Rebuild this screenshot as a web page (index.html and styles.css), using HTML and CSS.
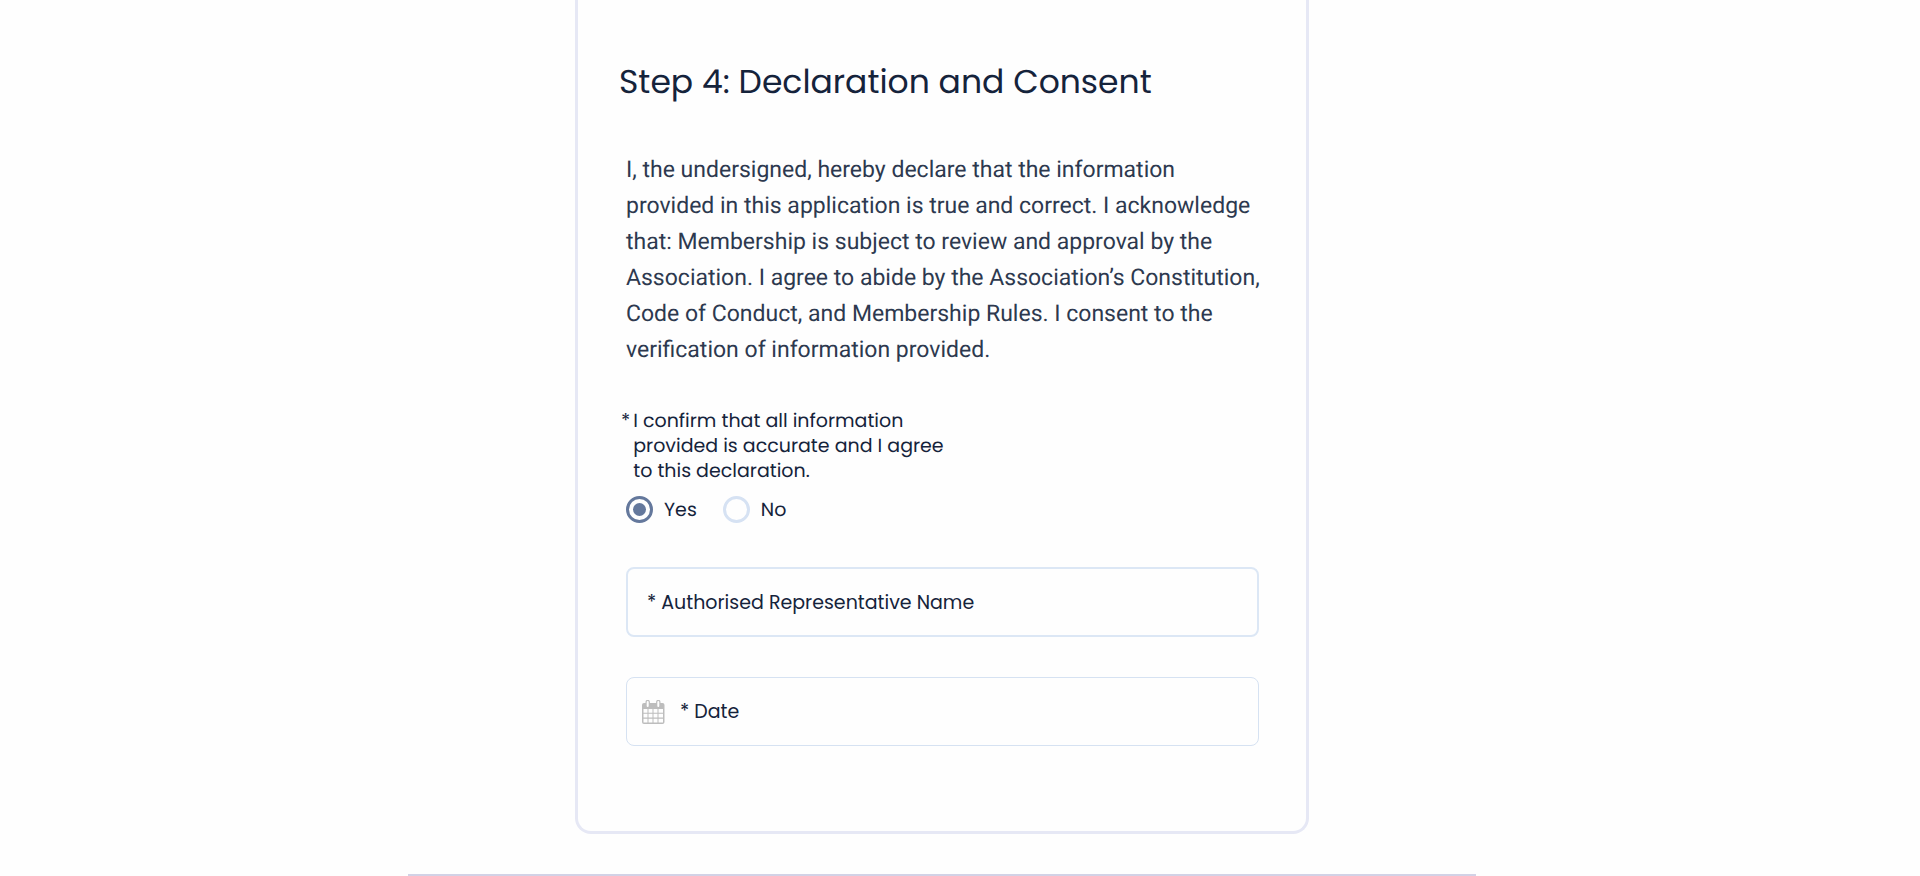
FILE: index.html
```html
<!DOCTYPE html>
<html lang="en">
<head>
<meta charset="utf-8">
<meta name="viewport" content="width=device-width, initial-scale=1">
<title>Declaration and Consent</title>
<link rel="stylesheet" href="styles.css">
</head>
<body>
<main class="section">
  <form class="card">
    <h2 class="title">Step 4: Declaration and Consent</h2>
    <p class="declaration">I, the undersigned, hereby declare that the information provided in this application is true and correct. I acknowledge that: Membership is subject to review and approval by the Association. I agree to abide by the Association’s Constitution, Code of Conduct, and Membership Rules. I consent to the verification of information provided.</p>
    <fieldset class="confirm">
      <legend class="question"><span class="star">*</span><span class="question-text">I confirm that all information provided is accurate and I agree to this declaration.</span></legend>
      <div class="options">
        <label class="option"><input class="radio" type="radio" name="confirm" value="yes" checked>Yes</label>
        <label class="option"><input class="radio" type="radio" name="confirm" value="no">No</label>
      </div>
    </fieldset>
    <div class="field field-name">
      <input class="input" type="text" aria-label="Authorised Representative Name" placeholder="* Authorised Representative Name">
    </div>
    <div class="field field-date">
      <svg class="calendar" viewBox="0 0 24 24" aria-hidden="true">
        <path fill="#bdbdbd" fill-rule="evenodd" d="M2 3H3.500V2a2.200 2.200 0 0 1 4.400 0v1h6.200V2a2.200 2.200 0 0 1 4.400 0v1h2a2 2 0 0 1 2 2v17a2 2 0 0 1-2 2H2a2 2 0 0 1-2-2V5a2 2 0 0 1 2-2zM4.700 2v4a1 1 0 0 0 2 0V2a1 1 0 0 0-2 0zM15.300 2v4a1 1 0 0 0 2 0V2a1 1 0 0 0-2 0zM1.500 9v3.800H5.500V9zM6.500 9v3.800h4V9zM11.500 9v3.800h4V9zM16.500 9v3.800h4.500V9zM1.500 13.800v3.800H5.500v-3.800zM6.500 13.800v3.800h4v-3.800zM11.500 13.800v3.800h4v-3.800zM16.500 13.800v3.800h4.500v-3.800zM1.500 18.700v3.800H5.500v-3.800zM6.500 18.700v3.800h4v-3.800zM11.500 18.700v3.800h4v-3.800zM16.500 18.700v3.800h4.500v-3.800z"/>
      </svg>
      <input class="input" type="text" aria-label="Date" placeholder="* Date">
    </div>
  </form>
</main>
</body>
</html>
```
FILE: styles.css
```css
* {
  box-sizing: border-box;
}

body {
  margin: 0;
  padding-right: 36px;
  background: #fefefe;
  color: #15233b;
  font-family: Poppins, Inter, sans-serif;
  font-size: 19px;
  text-rendering: geometricPrecision;
}

.section {
  max-width: 1068px;
  margin: 0 auto;
  padding-bottom: 40px;
  border-bottom: 2px solid #d2d2e6;
}

.card {
  max-width: 734px;
  margin: 0 auto;
  padding: 57px 47px 85px 48px;
  border: 3px solid #e6e8f5;
  border-top: 0;
  border-radius: 0 0 16px 16px;
}

.title {
  margin: 0 0 45px -7px;
  font-size: 33px;
  font-weight: 400;
  line-height: 50px;
}

.declaration {
  margin: 0 -8px 40px 0;
  color: #2d394f;
  font-family: Roboto, sans-serif;
  font-size: 23px;
  line-height: 36px;
}

.confirm {
  margin: 0 0 44px;
  padding: 0;
  border: 0;
}

.question {
  display: flex;
  gap: 3px;
  max-width: 330px;
  margin-left: -5px;
  padding: 0;
  line-height: 25px;
}

.options {
  display: flex;
  gap: 26px;
  padding-top: 13px;
}

.option {
  display: flex;
  align-items: center;
  gap: 11px;
  line-height: 27px;
}

.radio {
  display: grid;
  place-content: center;
  width: 27px;
  height: 27px;
  margin: 0;
  appearance: none;
  border: 3px solid #d6e2f3;
  border-radius: 50%;
}

.radio:checked {
  border-color: #64789c;
}

.radio:checked::before {
  width: 13px;
  height: 13px;
  border-radius: 50%;
  background: #64789c;
  content: "";
}

.field {
  display: flex;
  align-items: center;
  height: 70px;
  border: 1px solid #d6e2f2;
  border-radius: 8px;
}

.field-name {
  margin-bottom: 40px;
  padding: 0 19px;
  border-width: 2px;
  border-color: #dce7f5;
}

.field-date {
  gap: 14px;
  height: 69px;
  padding: 0 15px;
}

.calendar {
  flex: none;
  width: 24px;
  height: 24px;
}

.input {
  flex: 1;
  min-width: 0;
  padding: 0;
  border: 0;
  outline: 0;
  background: transparent;
  color: inherit;
  font: inherit;
}

.input::placeholder {
  color: #15233b;
  opacity: 1;
}
```
